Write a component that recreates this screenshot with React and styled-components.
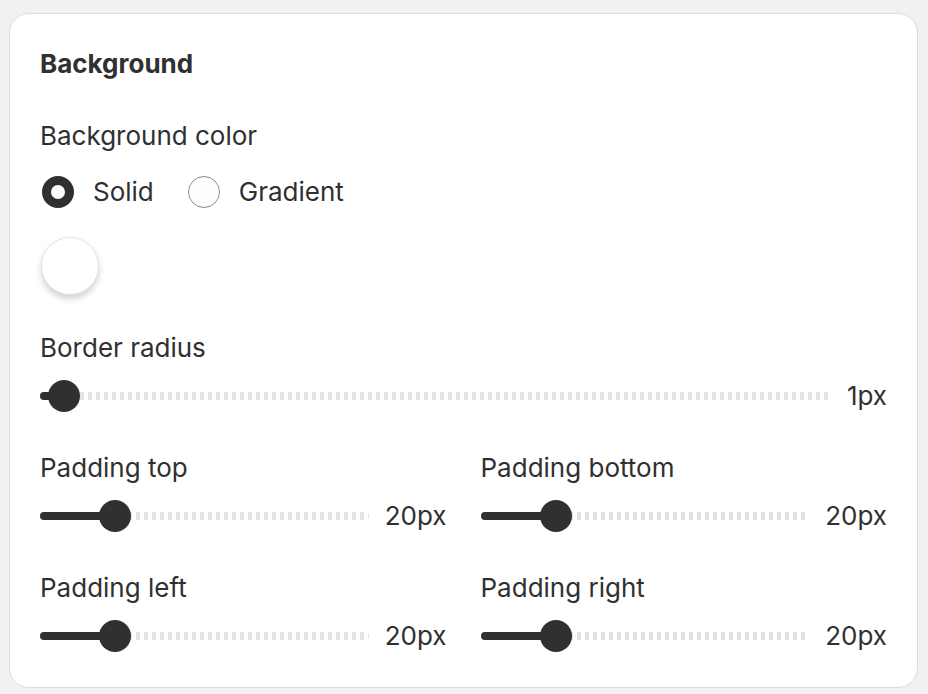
import React from 'react';
import styled, { createGlobalStyle } from 'styled-components';

const GlobalStyle = createGlobalStyle`
  html, body {
    margin: 0;
    padding: 0;
    background: #f1f1f1;
  }
  body {
    padding: 13px 10px 7px 9px;
    font-family: Inter, "Noto Sans", "Liberation Sans", sans-serif;
    color: #303030;
  }
`;

const Card = styled.div`
  background: #ffffff;
  border: 1px solid #dcdcdc;
  border-radius: 20px;
  padding: 34px 30px 35px 30px;
  display: flex;
  flex-direction: column;
`;

const Title = styled.h2`
  margin: 0;
  font-size: 26px;
  font-weight: 650;
  line-height: 32px;
`;

const Label = styled.div`
  font-size: 26px;
  line-height: 32px;
  font-weight: 400;
`;

const Section = styled.div`
  display: flex;
  flex-direction: column;
  gap: ${p => p.$gap ?? 16}px;
  margin-top: ${p => p.$top ?? 40}px;
`;

const RadioRow = styled.div`
  display: flex;
  align-items: center;
  gap: 34px;
  margin-top: 8px;
`;

const RadioOption = styled.label`
  display: flex;
  align-items: center;
  gap: 19px;
  font-size: 26px;
  line-height: 32px;
`;

const RadioDot = styled.span`
  box-sizing: border-box;
  width: 32px;
  height: 32px;
  margin-left: ${p => (p.$checked ? 2 : 0)}px;
  border-radius: 50%;
  background: #fdfdfd;
  border: ${p => (p.$checked ? '9px solid #303030' : '1px solid #8a8a8a')};
`;

const Swatch = styled.div`
  box-sizing: border-box;
  width: 58px;
  height: 58px;
  margin-top: 13px;
  margin-left: 1px;
  border-radius: 50%;
  background: #ffffff;
  border: 1px solid #e4e4e4;
  box-shadow: 0 4px 6px rgba(0, 0, 0, 0.18);
`;

const Columns = styled.div`
  display: grid;
  grid-template-columns: 1fr 1fr;
  column-gap: 34px;
`;

const SliderRow = styled.div`
  display: flex;
  align-items: center;
  gap: 16px;
  height: 32px;
`;

const Track = styled.div`
  position: relative;
  flex: 1;
  height: 32px;
`;

const Rail = styled.div`
  position: absolute;
  left: 0;
  right: 0;
  top: 12px;
  height: 8px;
  border-radius: 4px;
  overflow: hidden;
  background: repeating-linear-gradient(
    to right,
    #e3e3e3 0,
    #e3e3e3 4px,
    transparent 4px,
    transparent 8px
  );
`;

const Fill = styled.div`
  position: absolute;
  left: 0;
  top: 12px;
  height: 8px;
  border-radius: 4px;
  background: #303030;
`;

const Thumb = styled.div`
  position: absolute;
  top: 0;
  width: 32px;
  height: 32px;
  border-radius: 50%;
  background: #303030;
`;

const Value = styled.span`
  font-size: 26px;
  line-height: 32px;
  white-space: nowrap;
`;

const Slider = ({ value, max = 100 }) => {
  const pct = value / max;
  const left = `calc((100% - 32px) * ${pct})`;
  return (
    <SliderRow>
      <Track>
        <Rail />
        <Fill style={{ width: `calc((100% - 32px) * ${pct} + 16px)` }} />
        <Thumb style={{ left }} />
      </Track>
      <Value>{value}px</Value>
    </SliderRow>
  );
};

const Field = ({ label, value }) => (
  <Section $top={0}>
    <Label>{label}</Label>
    <Slider value={value} />
  </Section>
);

export default function App() {
  return (
    <>
      <GlobalStyle />
      <Card>
        <Title>Background</Title>

        <Section $top={40} $gap={16}>
          <Label>Background color</Label>
          <RadioRow>
            <RadioOption>
              <RadioDot $checked />
              Solid
            </RadioOption>
            <RadioOption>
              <RadioDot />
              Gradient
            </RadioOption>
          </RadioRow>
          <Swatch />
        </Section>

        <Section $top={37}>
          <Field label="Border radius" value={1} />
        </Section>

        <Section $top={40} $gap={40}>
          <Columns>
            <Field label="Padding top" value={20} />
            <Field label="Padding bottom" value={20} />
          </Columns>
          <Columns>
            <Field label="Padding left" value={20} />
            <Field label="Padding right" value={20} />
          </Columns>
        </Section>
      </Card>
    </>
  );
}
